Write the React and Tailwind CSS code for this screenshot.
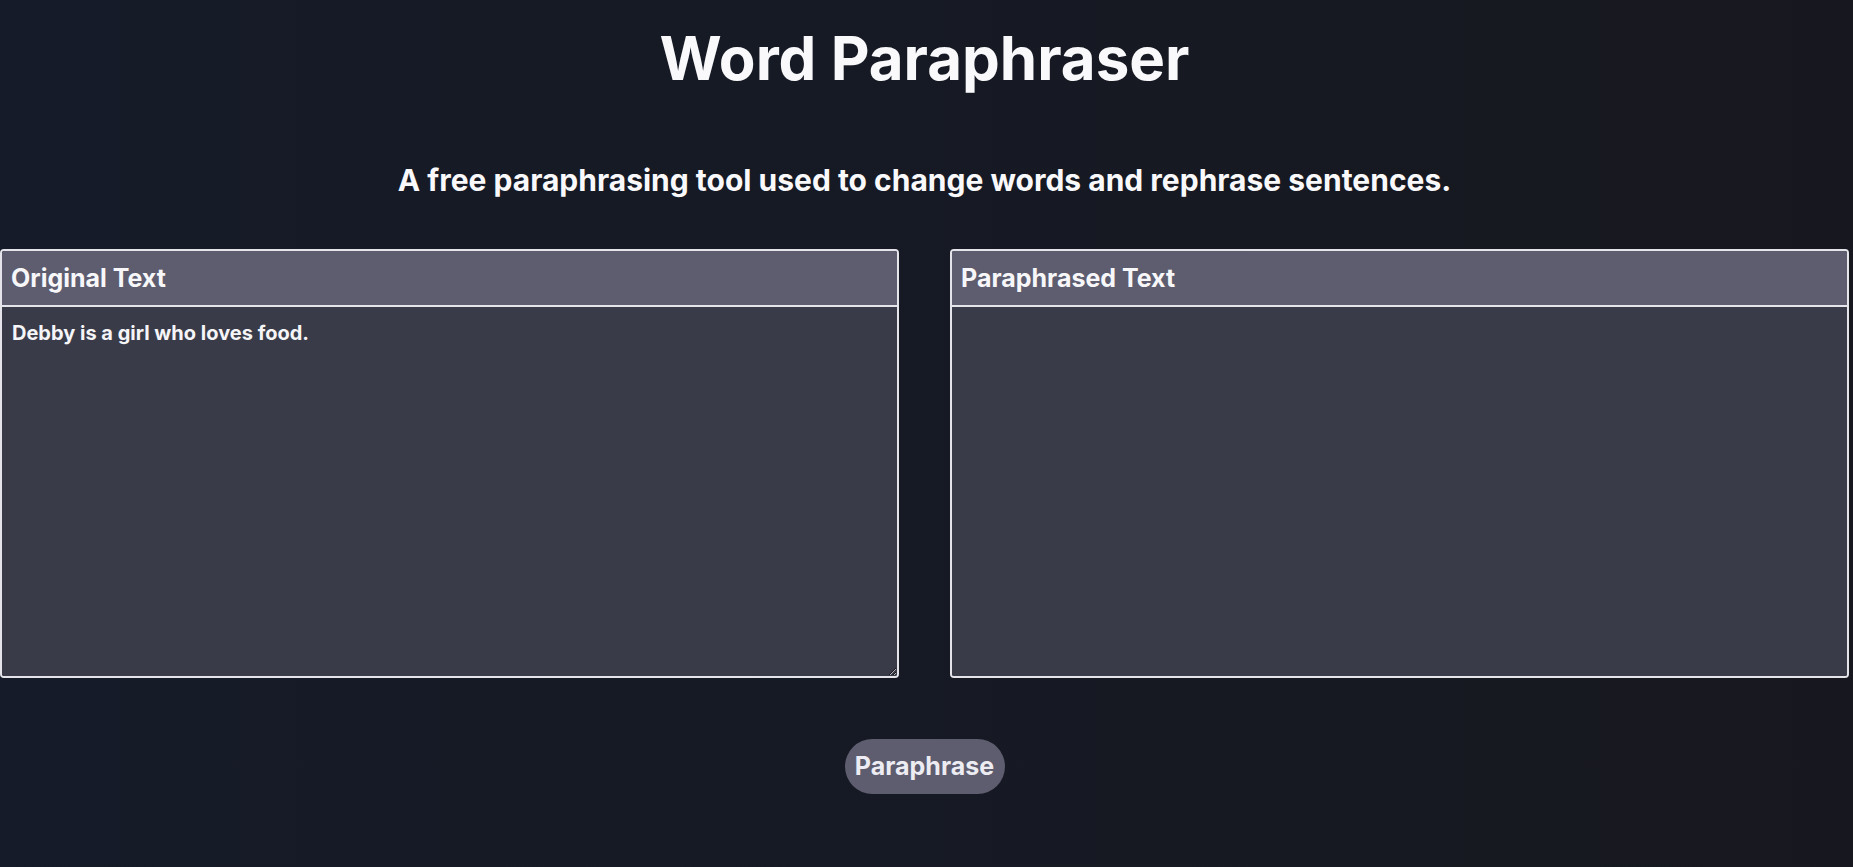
import React from "react";

function Panel({ title, children }) {
  return (
    <div className="flex h-[429px] w-[899px] flex-col overflow-hidden rounded-[4px] border-2 border-[#e4e4ea]">
      <div className="flex h-[56px] shrink-0 items-center border-b-2 border-[#e4e4ea] bg-[#5e5d6f] px-[9px]">
        <span className="text-[25px] font-bold leading-none text-[#f7f7fa]">{title}</span>
      </div>
      {children}
    </div>
  );
}

export default function App() {
  return (
    <div
      className="min-h-[867px] w-full bg-gradient-to-r from-[#151b28] to-[#17181f] text-white"
      style={{ fontFamily: "Inter, 'Noto Sans', sans-serif" }}
    >
      <div className="w-[1849px]">
        <div className="flex flex-col items-center pt-[28px]">
          <h1 className="text-[60px] font-bold leading-none text-[#f9f9fb]">Word Paraphraser</h1>
          <p className="mt-[77px] text-[30px] font-bold leading-none text-[#f9f9fb]">
            A free paraphrasing tool used to change words and rephrase sentences.
          </p>
        </div>
        <div className="mt-[54px] flex gap-[51px]">
          <Panel title="Original Text">
            <textarea
              className="block w-full flex-1 bg-[#3a3b48] px-[10px] pt-[11px] text-[20px] font-bold text-[#f5f5f8] outline-none"
              defaultValue="Debby is a girl who loves food."
            />
          </Panel>
          <Panel title="Paraphrased Text">
            <div className="flex-1 bg-[#3a3b48]" />
          </Panel>
        </div>
        <div className="mt-[61px] flex justify-center">
          <button className="h-[55px] w-[160px] rounded-full bg-[#5e5d6f] text-[25px] font-bold text-[#ececf2]">
            Paraphrase
          </button>
        </div>
      </div>
    </div>
  );
}
